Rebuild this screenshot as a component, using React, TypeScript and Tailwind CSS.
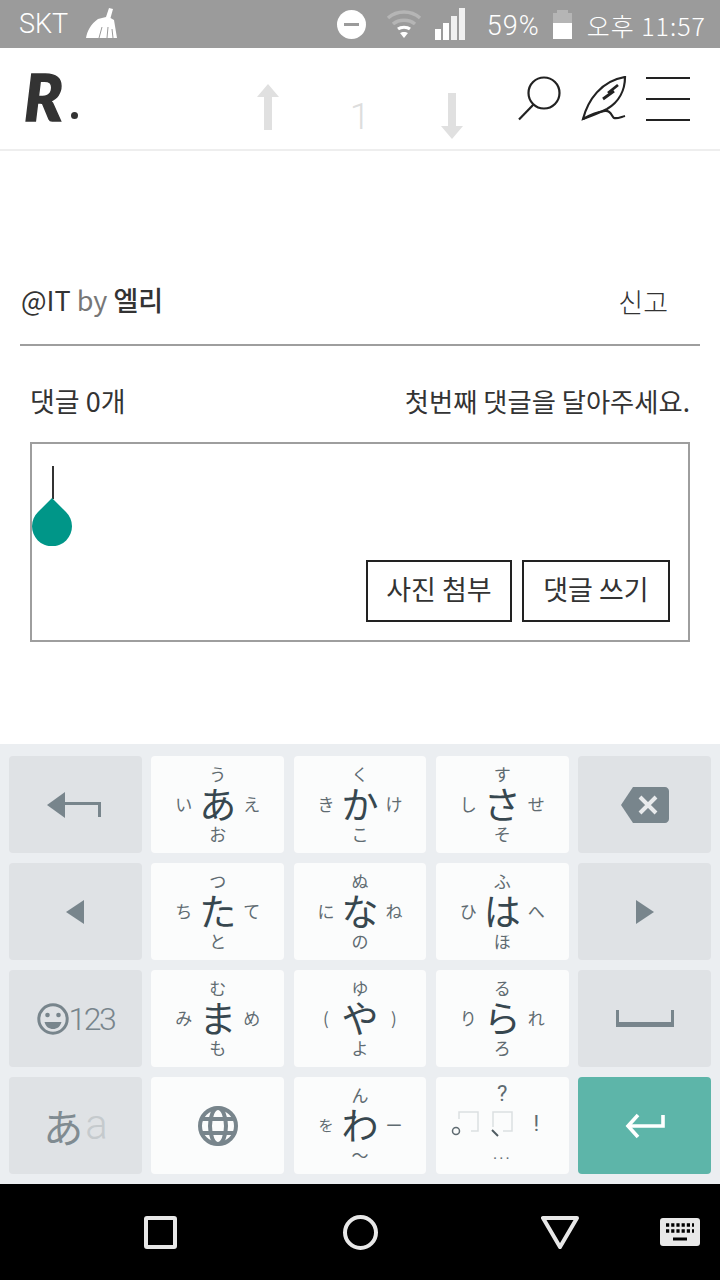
const kanaKeys = [
  { main: 'あ', top: 'う', left: 'い', right: 'え', bottom: 'お' },
  { main: 'か', top: 'く', left: 'き', right: 'け', bottom: 'こ' },
  { main: 'さ', top: 'す', left: 'し', right: 'せ', bottom: 'そ' },
  { main: 'た', top: 'つ', left: 'ち', right: 'て', bottom: 'と' },
  { main: 'な', top: 'ぬ', left: 'に', right: 'ね', bottom: 'の' },
  { main: 'は', top: 'ふ', left: 'ひ', right: 'へ', bottom: 'ほ' },
  { main: 'ま', top: 'む', left: 'み', right: 'め', bottom: 'も' },
  { main: 'や', top: 'ゆ', left: '(', right: ')', bottom: 'よ' },
  { main: 'ら', top: 'る', left: 'り', right: 'れ', bottom: 'ろ' },
]

const KanaKey = ({ k, small }: { k: { main: string, top: string, left: string, right: string, bottom: string }, small?: boolean }) => (
  <div className="bg-[#fbfcfc] rounded flex items-center justify-center font-['Noto_Sans_CJK_JP',sans-serif]">
    <div className="grid grid-cols-3 grid-rows-3 w-[102px] h-[90px] mt-[-2px] text-[#5f6b71] text-[17px] leading-none">
      <span />
      <span className="flex items-center justify-center">{k.top}</span>
      <span />
      <span className={`flex items-center justify-center ${small ? 'text-[15px]' : ''}`}>{k.left}</span>
      <span className="flex items-center justify-center text-[37px] text-[#37474f]">{k.main}</span>
      <span className="flex items-center justify-center">{k.right}</span>
      <span />
      <span className="flex items-center justify-center">{k.bottom}</span>
      <span />
    </div>
  </div>
)

const GrayKey = ({ children }: { children: React.ReactNode }) => (
  <div className="bg-[#dfe2e5] rounded flex items-center justify-center">{children}</div>
)

const StatusBar = () => (
  <div className="h-12 bg-[#9b9b9b] flex items-center text-white font-['Roboto',sans-serif] font-light">
    <span className="ml-[19px] mt-[1px] text-[27px] leading-none">SKT</span>
    <svg className="ml-[17px] mt-[-3px]" width="34" height="32" viewBox="0 0 34 32" fill="#fff">
      <path d="M24 1 L28 2 L25.5 11 L29 13 L30 19 L32 31 L1 31 C2 24 6 17 13 12 L21 10 Z" />
      <path d="M14 31 L17 20 M22 31 L23 20 M28 31 L27 22" stroke="#9b9b9b" strokeWidth="1" />
    </svg>
    <div className="ml-auto flex items-center">
      <div className="mr-[4px] w-[29px] h-[29px] rounded-full bg-white flex items-center justify-center">
        <div className="w-[15px] h-[3px] bg-[#9b9b9b]" />
      </div>
      <svg className="ml-[16px]" width="36" height="30" viewBox="0 0 36 30" fill="none">
        <path d="M2 9 C11 1 25 1 34 9" stroke="#b5b5b5" strokeWidth="3.5" />
        <path d="M7 15 C13 10 23 10 29 15" stroke="#b5b5b5" strokeWidth="3.5" />
        <path d="M12 20 C15 17.5 21 17.5 24 20" stroke="#fff" strokeWidth="3" />
        <path d="M18 29 L14 24 C16 22.5 20 22.5 22 24 Z" fill="#fff" />
      </svg>
      <div className="ml-[13px] flex items-end gap-[2px] h-[32px] mt-[-1px]">
        <div className="w-[6px] h-[11px] bg-white" />
        <div className="w-[6px] h-[17px] bg-white" />
        <div className="w-[6px] h-[24px] bg-[#f0f0f0]" />
        <div className="w-[6px] h-[32px] bg-[#f0f0f0]" />
      </div>
      <span className="ml-[22px] mt-[5px] text-[27px] leading-none tracking-[1px]">59%</span>
      <div className="ml-[13px] w-[19px] h-[29px] flex flex-col items-center">
        <div className="w-[11px] h-[3px] bg-[#b5b5b5]" />
        <div className="w-[19px] h-[10px] bg-[#b5b5b5]" />
        <div className="w-[19px] h-[16px] bg-white" />
      </div>
      <span className="ml-[15px] mr-[14px] mt-[2px] text-[25px] leading-none font-['Noto_Sans_CJK_KR',sans-serif] font-light tracking-[1px]">오후 11:57</span>
    </div>
  </div>
)

const Header = () => (
  <div className="h-[103px] bg-white border-b-2 border-[#eeeeee] flex items-center">
    <div className="ml-[24px] w-[59px] shrink-0 flex items-center">
      <span className="mt-[-4px] text-[64px] leading-none font-black italic text-[#333] [-webkit-text-stroke:1.5px_#333] font-['Lato',sans-serif]">R</span>
      <div className="w-[7px] h-[7px] rounded-full bg-[#333] ml-[8px] mt-[34px]" />
    </div>
    <svg className="ml-[172px] mt-[17px]" width="26" height="48" viewBox="0 0 26 48" fill="#e0e0e0">
      <path d="M13 1 L24 14 L17 14 L17 47 L9 47 L9 14 L2 14 Z" />
    </svg>
    <span className="ml-[66px] w-[26px] text-center mt-[36px] text-[37px] leading-none text-[#dddddd] font-['Roboto',sans-serif] font-light">1</span>
    <svg className="ml-[66px] mt-[35px]" width="26" height="48" viewBox="0 0 26 48" fill="#e0e0e0">
      <path d="M13 47 L24 34 L17 34 L17 1 L9 1 L9 34 L2 34 Z" />
    </svg>
    <svg className="ml-[52px] mt-[1px]" width="46" height="46" viewBox="0 0 46 46" fill="none" stroke="#222" strokeWidth="2.2">
      <circle cx="27" cy="17" r="15.5" />
      <path d="M16.5 28.5 L2 43.5" />
    </svg>
    <svg className="ml-[18px] mt-[1px]" width="46" height="46" viewBox="0 0 46 46" fill="none" stroke="#222" strokeWidth="2.2">
      <path d="M2 43 C7 24 20 5 44 1 C44 14 38 26 26 33 C18 37 10 40 2 43 Z" />
      <path d="M2 43 C10 38 16 36 24 35 C30 34 31 41 33 42 C36 43 40 41 44 40" />
      <path d="M22 23 L33 15 M27 17 L37 9" strokeWidth="2.8" />
    </svg>
    <div className="ml-[19px] mt-[1px] w-[44px] h-[44px] flex flex-col justify-between">
      <div className="h-[2px] bg-[#222]" />
      <div className="h-[2px] bg-[#222]" />
      <div className="h-[2px] bg-[#222]" />
    </div>
  </div>
)

const Content = () => (
  <div className="flex-1 bg-white px-5 pt-[127px] text-[#333] font-['Noto_Sans_CJK_KR',sans-serif]">
    <div className="h-[68px] flex items-start justify-between border-b-2 border-[#9e9e9e] pl-[1px] pr-[32px]">
      <div className="text-[27px] leading-[42px] mt-[1px]">
        @IT <span className="text-[#777]">by</span> <span className="font-medium">엘리</span>
      </div>
      <span className="text-[27px] leading-[42px] mt-[3px] font-light">신고</span>
    </div>
    <div className="mx-[10px] mt-[33px] flex justify-between items-center text-[26.3px] leading-[44px]">
      <span className="text-[27px]">댓글 0개</span>
      <span>첫번째 댓글을 달아주세요.</span>
    </div>
    <div className="mx-[10px] mt-[19px] h-[200px] border-2 border-[#9e9e9e] relative flex items-end justify-end gap-[10px] pr-[18px] pb-[18px]">
      <div className="absolute left-[20px] top-[22px] w-[2px] h-[33px] bg-[#333]" />
      <svg className="absolute left-0 top-[54px]" width="40" height="48" viewBox="0 0 40 48" fill="#009688">
        <path d="M20 0 L34 14 A20 20 0 1 1 6 14 Z" />
      </svg>
      <div className="w-[146px] h-[62px] border-2 border-[#222] flex items-center justify-center text-[27px] leading-none pb-[6px]">사진 첨부</div>
      <div className="w-[148px] h-[62px] border-2 border-[#222] flex items-center justify-center text-[27px] leading-none pb-[6px]">댓글 쓰기</div>
    </div>
  </div>
)

const Keyboard = () => (
  <div className="h-[440px] bg-[#ebeef1] px-[9px] pt-3 pb-[10px]">
    <div className="grid grid-cols-5 grid-rows-4 gap-x-[9.5px] gap-y-[10px] h-full">
      <GrayKey>
        <svg width="56" height="28" viewBox="0 0 56 28" fill="#78858c">
          <path d="M0 14 L18 1 L18 27 Z" />
          <path d="M18 11 H54 V26 H51 V14 H18 Z" />
        </svg>
      </GrayKey>
      <KanaKey k={kanaKeys[0]} />
      <KanaKey k={kanaKeys[1]} />
      <KanaKey k={kanaKeys[2]} />
      <GrayKey>
        <svg width="48" height="36" viewBox="0 0 48 36" fill="none">
          <path d="M12 0 H44 C46 0 48 2 48 4 V32 C48 34 46 36 44 36 H12 L0 18 Z" fill="#78858c" />
          <path d="M19 10 L35 26 M35 10 L19 26" stroke="#e8eaec" strokeWidth="4" />
        </svg>
      </GrayKey>

      <GrayKey>
        <svg width="18" height="24" viewBox="0 0 18 24" fill="#78858c"><path d="M0 12 L18 0 V24 Z" /></svg>
      </GrayKey>
      <KanaKey k={kanaKeys[3]} />
      <KanaKey k={kanaKeys[4]} />
      <KanaKey k={kanaKeys[5]} />
      <GrayKey>
        <svg width="18" height="24" viewBox="0 0 18 24" fill="#78858c"><path d="M18 12 L0 0 V24 Z" /></svg>
      </GrayKey>

      <GrayKey>
        <div className="flex items-center text-[#78858c] mt-[1px]">
          <svg width="32" height="32" viewBox="0 0 32 32" fill="none">
            <circle cx="16" cy="16" r="14.2" stroke="#78858c" strokeWidth="3" />
            <circle cx="10.5" cy="12" r="2.3" fill="#78858c" />
            <circle cx="21.5" cy="12" r="2.3" fill="#78858c" />
            <path d="M7.5 19 H24.5 C23 24 20 26 16 26 C12 26 9 24 7.5 19 Z" fill="#78858c" />
          </svg>
          <span className="text-[32px] leading-none tracking-[-2.5px] font-['Roboto',sans-serif] font-light">123</span>
        </div>
      </GrayKey>
      <KanaKey k={kanaKeys[6]} />
      <KanaKey k={kanaKeys[7]} />
      <KanaKey k={kanaKeys[8]} />
      <GrayKey>
        <svg width="58" height="17" viewBox="0 0 58 17" fill="#78858c"><path d="M0 0 H3 V12 H55 V0 H58 V17 H0 Z" /></svg>
      </GrayKey>

      <GrayKey>
        <div className="flex items-center font-['Noto_Sans_CJK_JP',sans-serif] leading-none">
          <span className="text-[40px] text-[#808b91]">あ</span>
          <span className="text-[42px] ml-[2px] mt-[-1px] text-[#c5cacd] font-['Roboto',sans-serif] font-light">a</span>
        </div>
      </GrayKey>
      <div className="bg-[#fbfcfc] rounded flex items-center justify-center">
        <svg width="40" height="40" viewBox="0 0 40 40" fill="none" stroke="#78858c" strokeWidth="4">
          <circle cx="20" cy="20" r="18" />
          <ellipse cx="20" cy="20" rx="8" ry="18" />
          <path d="M3 13 H37 M3 27 H37" />
        </svg>
      </div>
      <KanaKey k={{ main: 'わ', top: 'ん', left: 'を', right: 'ー', bottom: '〜' }} small />
      <div className="bg-[#fbfcfc] rounded flex items-center justify-center font-['Roboto',sans-serif]">
        <div className="grid grid-cols-3 grid-rows-3 w-[102px] h-[90px] mt-[-3px] text-[#5f6b71] text-[20px] leading-none">
          <span />
          <span className="flex items-center justify-center text-[22px]">?</span>
          <span />
          <div className="flex items-center justify-center">
            <svg className="ml-[-6px]" width="28" height="26" viewBox="0 0 28 26" fill="none">
              <path d="M8 8 V1 H27 V20 H20" stroke="#dcdfe1" strokeWidth="1.5" />
              <circle cx="5" cy="20" r="3.5" stroke="#5f6b71" strokeWidth="1.5" />
            </svg>
          </div>
          <div className="flex items-center justify-center">
            <svg className="ml-[-3px]" width="24" height="26" viewBox="0 0 24 26" fill="none">
              <path d="M4 16 V1 H23 V20 H14" stroke="#dcdfe1" strokeWidth="1.5" />
              <path d="M3 19 L9 25" stroke="#4f5b61" strokeWidth="2" />
            </svg>
          </div>
          <span className="flex items-center justify-center text-[22px]">!</span>
          <span />
          <span className="flex items-center justify-center text-[16px] tracking-[2px]">...</span>
          <span />
        </div>
      </div>
      <div className="bg-[#5db5a9] rounded flex items-center justify-center">
        <svg width="40" height="26" viewBox="0 0 40 26" fill="none" stroke="#fff" strokeWidth="3.6">
          <path d="M13 2 L3 13 L13 24" />
          <path d="M3 13 H38 V2" />
        </svg>
      </div>
    </div>
  </div>
)

const NavBar = () => (
  <div className="h-24 bg-black relative flex items-center justify-center">
    <div className="absolute left-[144px] top-[32px] w-[33px] h-[33px] border-4 border-[#e8e8e8] rounded-[3px]" />
    <div className="absolute left-[343px] top-[31px] w-[35px] h-[35px] border-4 border-[#e8e8e8] rounded-full" />
    <svg className="absolute left-[541px] top-[32px]" width="38" height="33" viewBox="0 0 38 33" fill="none" stroke="#e8e8e8" strokeWidth="4" strokeLinejoin="round">
      <path d="M2 2 H36 L19 31 Z" />
    </svg>
    <svg className="absolute left-[660px] top-[34px]" width="40" height="28" viewBox="0 0 40 28">
      <rect width="40" height="28" rx="3" fill="#e8e8e8" />
      <path d="M6 7 H34 M6 13 H34" stroke="#000" strokeWidth="3.4" strokeDasharray="3.2 2" />
      <path d="M13 21 H27" stroke="#000" strokeWidth="3" />
    </svg>
  </div>
)

export default function App() {
  return (
    <div className="w-[720px] h-[1280px] flex flex-col overflow-hidden bg-white">
      <StatusBar />
      <Header />
      <Content />
      <Keyboard />
      <NavBar />
    </div>
  )
}
